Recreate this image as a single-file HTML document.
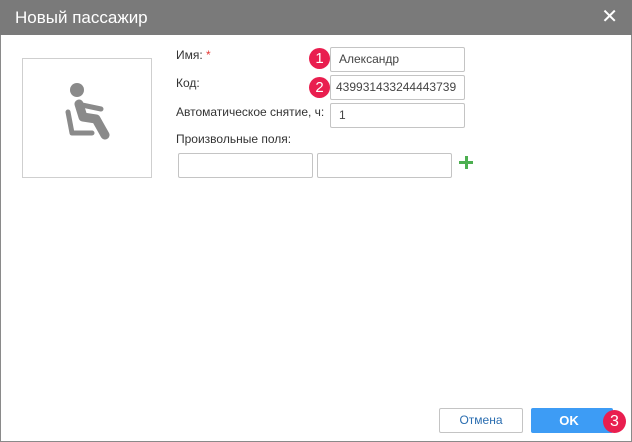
<!DOCTYPE html>
<html><head><meta charset="utf-8"><style>
*{box-sizing:border-box;margin:0;padding:0}
body{width:632px;height:442px;background:#fff;font-family:"Liberation Sans",sans-serif;position:relative;overflow:hidden}
.dlg{position:absolute;left:0;top:0;width:632px;height:442px;border:1px solid #8a8a8a}
.hdr{position:absolute;left:0;top:0;width:632px;height:35px;background:#7a7a7a;color:#fff;font-size:17px;line-height:35px;padding-left:15px}
.x{position:absolute;right:14px;top:0;font-size:20px;line-height:35px;color:#fff}
.abs{position:absolute}
.lbl{position:absolute;left:176px;font-size:12px;color:#333}
.inp{position:absolute;border:1px solid #c4c4c4;border-radius:2px;height:25px;font-size:12px;color:#444;line-height:23px;padding-left:8px;background:#fff}
.b{position:absolute;width:21px;height:21px;border-radius:50%;background:#e91e4f;color:#fff;font-size:15px;text-align:center;line-height:21px}
</style></head><body>
<div class="dlg"></div>
<div class="hdr">Новый пассажир<span class="x">✕</span></div>
<div class="abs" style="left:22px;top:58px;width:130px;height:120px;border:1px solid #cfcfcf"></div>
<svg class="abs" style="left:50px;top:75px" width="70" height="70" viewBox="0 0 70 70">
<circle cx="27" cy="15" r="7" fill="#8a8a8a"/>
<path d="M29 29 L33 42 L46 44 L55 60" stroke="#8a8a8a" stroke-width="9" fill="none" stroke-linecap="round" stroke-linejoin="round"/>
<path d="M32 30 L51 34" stroke="#8a8a8a" stroke-width="5" stroke-linecap="round"/>
<path d="M18 37 L22 58 H42" stroke="#8a8a8a" stroke-width="5" fill="none" stroke-linecap="round" stroke-linejoin="round"/>
</svg>
<div class="lbl" style="top:48px">Имя: <span style="color:#e53935">*</span></div>
<div class="lbl" style="top:76px">Код:</div>
<div class="lbl" style="top:105px">Автоматическое снятие, ч:</div>
<div class="lbl" style="top:132px">Произвольные поля:</div>
<div class="inp" style="left:330px;top:47px;width:135px">Александр</div>
<div class="inp" style="left:330px;top:75px;width:135px;padding-left:5px">439931433244443739</div>
<div class="inp" style="left:330px;top:103px;width:135px">1</div>
<div class="inp" style="left:178px;top:153px;width:135px"></div>
<div class="inp" style="left:317px;top:153px;width:135px"></div>
<div class="abs" style="left:459px;top:161px;width:14px;height:3px;background:#4caf50"></div>
<div class="abs" style="left:464.5px;top:156px;width:3px;height:13px;background:#4caf50"></div>
<div class="b" style="left:309px;top:48px">1</div>
<div class="b" style="left:309px;top:77px">2</div>
<div class="abs" style="left:439px;top:408px;width:84px;height:25px;border:1px solid #c4c4c4;border-radius:2px;color:#2a6db0;font-size:12px;text-align:center;line-height:23px">Отмена</div>
<div class="abs" style="left:531px;top:408px;width:82px;height:25px;background:#3d9cf5;border-radius:2px;color:#fff;font-size:13px;font-weight:bold;text-align:center;line-height:25px;padding-right:6px">OK</div>
<div class="b" style="left:603px;top:410px;width:23px;height:23px;line-height:23px;font-size:16px">3</div>
</body></html>
